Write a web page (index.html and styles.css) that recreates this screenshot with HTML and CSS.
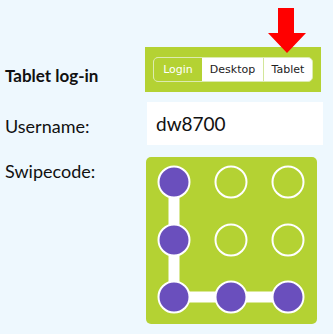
FILE: index.html
```html
<!DOCTYPE html>
<html lang="en">
<head>
  <meta charset="UTF-8">
  <title>Tablet log-in</title>
  <link rel="stylesheet" href="styles.css">
</head>
<body>
  <div class="page">
    <!-- red pointer over the mode switch -->
    <svg class="arrow" width="40" height="48" viewBox="0 0 40 48">
      <polygon points="10,0 26,0 26,25 38,25 19,45 0,25 10,25" fill="#ff0000"/>
    </svg>

    <div class="row row-head">
      <div class="label title">Tablet log-in</div>
      <div class="modebar">
        <div class="switch">
          <span class="seg active">Login</span>
          <span class="seg">Desktop</span>
          <span class="seg">Tablet</span>
        </div>
      </div>
    </div>

    <div class="row row-user">
      <div class="label">Username:</div>
      <div class="field">dw8700</div>
    </div>

    <div class="row row-swipe">
      <div class="label">Swipecode:</div>
      <div class="pad">
        <svg width="171" height="167" viewBox="0 0 171 167">
          <polyline points="28,25 28,140 142,140" fill="none" stroke="#fff" stroke-width="11"/>
          <g fill="none" stroke="#fff" stroke-width="2">
            <circle cx="85" cy="25" r="15.5"/>
            <circle cx="142" cy="25" r="15.5"/>
            <circle cx="85" cy="83" r="15.5"/>
            <circle cx="142" cy="83" r="15.5"/>
          </g>
          <g fill="#6a4fbd" stroke="#fff" stroke-width="2">
            <circle cx="28" cy="25" r="15.5"/>
            <circle cx="28" cy="83" r="15.5"/>
            <circle cx="28" cy="140" r="15.5"/>
            <circle cx="85" cy="140" r="15.5"/>
            <circle cx="142" cy="140" r="15.5"/>
          </g>
        </svg>
      </div>
    </div>
  </div>
</body>
</html>
```
FILE: styles.css
```css
html, body {
  margin: 0;
  background-color: #eef8fe;
}
body {
  font-family: 'Lato', 'Liberation Sans', sans-serif;
  color: #111;
}
.page {
  position: relative;
  width: 333px;
  height: 334px;
  padding: 47px 0 0 5px;
  box-sizing: border-box;
}
.arrow {
  position: absolute;
  left: 268px;
  top: 8px;
}
.row {
  display: flex;
}
.label {
  width: 140px;
  font-size: 18px;
}
.title {
  font-weight: bold;
  font-size: 17px;
}
.row-head {
  align-items: center;
}
.row-head .title {
  padding-top: 12px;
}
.modebar {
  width: 176px;
  height: 45px;
  background-color: #b4d233;
  padding: 10px 0 0 8px;
  box-sizing: border-box;
}
.switch {
  display: flex;
  width: 160px;
  height: 25px;
  background-color: #fff;
  border: 1px solid #dcebb0;
  border-radius: 5px;
  box-sizing: border-box;
  overflow: hidden;
  font-family: 'DejaVu Sans', sans-serif;
  font-size: 11px;
}
.seg {
  display: flex;
  align-items: center;
  justify-content: center;
  color: #222;
}
.seg:nth-child(1) { width: 48px; }
.seg:nth-child(2) { width: 61px; }
.seg:nth-child(3) { flex: 1; border-left: 1px solid #d3e69a; }
.seg.active {
  background-color: #b4d233;
  color: #fff;
}
.row-user {
  margin-top: 10px;
  align-items: center;
}
.row-user .label {
  padding-top: 4px;
}
.field {
  width: 176px;
  height: 43px;
  margin-left: 2px;
  background-color: #fff;
  box-sizing: border-box;
  padding: 0 0 0 9px;
  display: flex;
  align-items: center;
  font-size: 19px;
}
.row-swipe {
  margin-top: 12px;
}
.row-swipe .label {
  padding-top: 3px;
}
.pad {
  width: 171px;
  height: 167px;
  margin-left: 1px;
  background-color: #b4d233;
  border-radius: 5px;
}
.pad svg {
  display: block;
}
```
